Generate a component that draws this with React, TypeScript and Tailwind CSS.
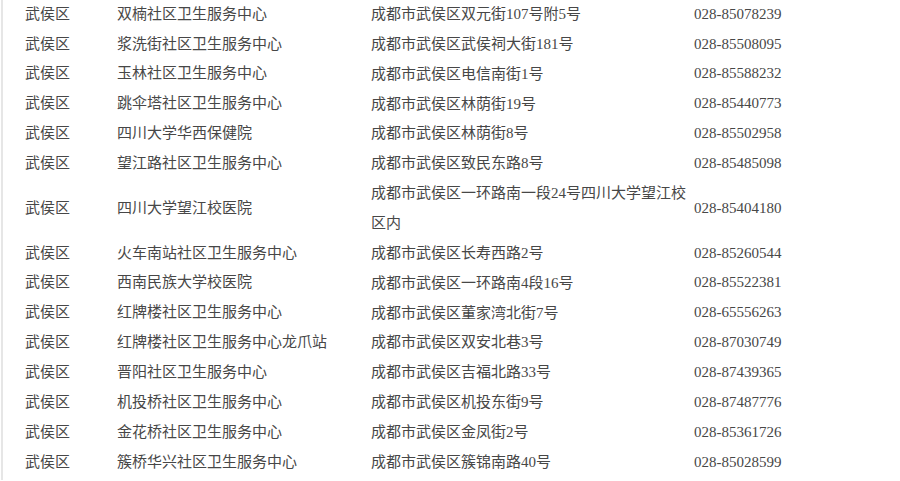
const rows: { district: string; name: string; addr: string[]; phone: string }[] = [
  { district: "武侯区", name: "双楠社区卫生服务中心", addr: ["成都市武侯区双元街107号附5号"], phone: "028-85078239" },
  { district: "武侯区", name: "浆洗街社区卫生服务中心", addr: ["成都市武侯区武侯祠大街181号"], phone: "028-85508095" },
  { district: "武侯区", name: "玉林社区卫生服务中心", addr: ["成都市武侯区电信南街1号"], phone: "028-85588232" },
  { district: "武侯区", name: "跳伞塔社区卫生服务中心", addr: ["成都市武侯区林荫街19号"], phone: "028-85440773" },
  { district: "武侯区", name: "四川大学华西保健院", addr: ["成都市武侯区林荫街8号"], phone: "028-85502958" },
  { district: "武侯区", name: "望江路社区卫生服务中心", addr: ["成都市武侯区致民东路8号"], phone: "028-85485098" },
  { district: "武侯区", name: "四川大学望江校医院", addr: ["成都市武侯区一环路南一段24号四川大学望江校", "区内"], phone: "028-85404180" },
  { district: "武侯区", name: "火车南站社区卫生服务中心", addr: ["成都市武侯区长寿西路2号"], phone: "028-85260544" },
  { district: "武侯区", name: "西南民族大学校医院", addr: ["成都市武侯区一环路南4段16号"], phone: "028-85522381" },
  { district: "武侯区", name: "红牌楼社区卫生服务中心", addr: ["成都市武侯区董家湾北街7号"], phone: "028-65556263" },
  { district: "武侯区", name: "红牌楼社区卫生服务中心龙爪站", addr: ["成都市武侯区双安北巷3号"], phone: "028-87030749" },
  { district: "武侯区", name: "晋阳社区卫生服务中心", addr: ["成都市武侯区吉福北路33号"], phone: "028-87439365" },
  { district: "武侯区", name: "机投桥社区卫生服务中心", addr: ["成都市武侯区机投东街9号"], phone: "028-87487776" },
  { district: "武侯区", name: "金花桥社区卫生服务中心", addr: ["成都市武侯区金凤街2号"], phone: "028-85361726" },
  { district: "武侯区", name: "簇桥华兴社区卫生服务中心", addr: ["成都市武侯区簇锦南路40号"], phone: "028-85028599" },
];

export default function App() {
  return (
    <div className="w-[900px] h-[481px] overflow-hidden bg-white">
      <div
        className="ml-[1px] h-full border-l-2 border-[#e6e6e6] -mt-[1px] text-[15px] text-[#474747]"
        style={{ fontFamily: '"Liberation Serif", "Noto Sans CJK SC", serif' }}
      >
        {rows.map((r, i) => (
          <div
            key={i}
            className={`flex items-center whitespace-nowrap ${r.addr.length > 1 ? "h-[59.74px]" : "h-[29.87px]"}`}
          >
            <div className="w-[114px] pl-[22px]">{r.district}</div>
            <div className="w-[254px]">{r.name}</div>
            <div className="w-[323px] leading-[30px]">
              {r.addr.map((a, j) => (
                <div key={j}>{a}</div>
              ))}
            </div>
            <div>{r.phone}</div>
          </div>
        ))}
      </div>
    </div>
  );
}
